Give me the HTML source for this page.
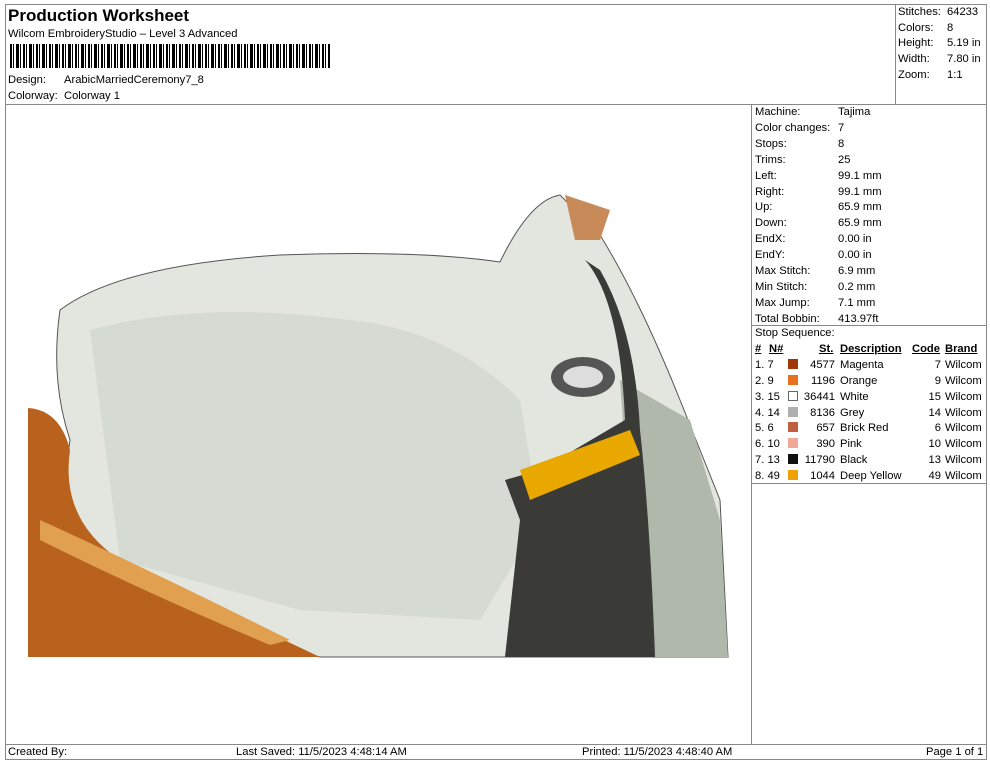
<!DOCTYPE html>
<html><head><meta charset="utf-8"><style>
*{margin:0;padding:0;box-sizing:border-box}
body{width:990px;height:762px;background:#fff;font-family:"Liberation Sans",sans-serif;font-size:11.2px;color:#000;position:relative;overflow:hidden}
.a{position:absolute;white-space:nowrap}
.l{position:absolute;background:#888}
.sw{display:inline-block;width:10px;height:10px;vertical-align:-1px}
</style></head><body>
<div class="l" style="left:5px;top:4px;width:982px;height:1px"></div>
<div class="l" style="left:5px;top:4px;width:1px;height:756px"></div>
<div class="l" style="left:986px;top:4px;width:1px;height:756px"></div>
<div class="l" style="left:5px;top:759px;width:982px;height:1px"></div>
<div class="l" style="left:5px;top:104px;width:982px;height:1px"></div>
<div class="l" style="left:895px;top:4px;width:1px;height:100px"></div>
<div class="l" style="left:751px;top:104px;width:1px;height:640px"></div>
<div class="l" style="left:751px;top:325px;width:236px;height:1px"></div>
<div class="l" style="left:751px;top:483px;width:236px;height:1px"></div>
<div class="l" style="left:5px;top:744px;width:982px;height:1px"></div>

<div class="a" style="left:8px;top:6px;font-size:17px;font-weight:bold">Production Worksheet</div>
<div class="a" style="left:8px;top:28px">Wilcom EmbroideryStudio – Level 3 Advanced</div>
<div class="a" style="left:10px;top:44px;width:320px;height:24px;background:repeating-linear-gradient(90deg,#000 0 2px,#fff 2px 3px,#000 3px 4px,#fff 4px 6px,#000 6px 9px,#fff 9px 10px,#000 10px 11px,#fff 11px 13px)"></div>
<div class="a" style="left:8px;top:74px">Design:</div><div class="a" style="left:64px;top:74px">ArabicMarriedCeremony7_8</div>
<div class="a" style="left:8px;top:90px">Colorway:</div><div class="a" style="left:64px;top:90px">Colorway 1</div>

<div class="a" style="left:898px;top:5px;line-height:15.7px">Stitches:<br>Colors:<br>Height:<br>Width:<br>Zoom:</div>
<div class="a" style="left:947px;top:5px;line-height:15.7px">64233<br>8<br>5.19 in<br>7.80 in<br>1:1</div>

<div class="a" style="left:755px;top:105px;line-height:15.9px">Machine:<br>Color changes:<br>Stops:<br>Trims:<br>Left:<br>Right:<br>Up:<br>Down:<br>EndX:<br>EndY:<br>Max Stitch:<br>Min Stitch:<br>Max Jump:<br>Total Bobbin:</div>
<div class="a" style="left:838px;top:105px;line-height:15.9px">Tajima<br>7<br>8<br>25<br>99.1 mm<br>99.1 mm<br>65.9 mm<br>65.9 mm<br>0.00 in<br>0.00 in<br>6.9 mm<br>0.2 mm<br>7.1 mm<br>413.97ft</div>

<div class="a" style="left:755px;top:327px">Stop Sequence:</div>
<div class="a" style="left:755px;top:343px;font-weight:bold;text-decoration:underline">#</div>
<div class="a" style="left:769px;top:343px;font-weight:bold;text-decoration:underline">N#</div>
<div class="a" style="left:819px;top:343px;font-weight:bold;text-decoration:underline">St.</div>
<div class="a" style="left:840px;top:343px;font-weight:bold;text-decoration:underline">Description</div>
<div class="a" style="left:912px;top:343px;font-weight:bold;text-decoration:underline">Code</div>
<div class="a" style="left:945px;top:343px;font-weight:bold;text-decoration:underline">Brand</div>
<div class="a" style="left:755px;top:358px;line-height:15.85px">1. 7<br>2. 9<br>3. 15<br>4. 14<br>5. 6<br>6. 10<br>7. 13<br>8. 49</div>
<div class="a" style="left:788px;top:358px;line-height:15.85px">
<span class="sw" style="background:#a0360c"></span><br><span class="sw" style="background:#e8701e"></span><br><span class="sw" style="background:#fff;border:1px solid #666"></span><br><span class="sw" style="background:#b0b0b0"></span><br><span class="sw" style="background:#c06040"></span><br><span class="sw" style="background:#f2a898"></span><br><span class="sw" style="background:#111"></span><br><span class="sw" style="background:#f0a000"></span></div>
<div class="a" style="left:800px;top:358px;width:35px;text-align:right;line-height:15.85px">4577<br>1196<br>36441<br>8136<br>657<br>390<br>11790<br>1044</div>
<div class="a" style="left:840px;top:358px;line-height:15.85px">Magenta<br>Orange<br>White<br>Grey<br>Brick Red<br>Pink<br>Black<br>Deep Yellow</div>
<div class="a" style="left:905px;top:358px;width:36px;text-align:right;line-height:15.85px">7<br>9<br>15<br>14<br>6<br>10<br>13<br>49</div>
<div class="a" style="left:945px;top:358px;line-height:15.85px">Wilcom<br>Wilcom<br>Wilcom<br>Wilcom<br>Wilcom<br>Wilcom<br>Wilcom<br>Wilcom</div>

<svg class="a" style="left:6px;top:105px" width="745" height="639" viewBox="6 105 745 639">
<path d="M60 310 Q120 265 280 255 Q420 250 500 262 Q530 200 560 195 L600 235 Q640 300 680 400 L720 500 L728 657 L440 657 L320 657 L90 600 Q60 500 70 440 Q50 380 60 310Z" fill="#e2e6de" stroke="#555" stroke-width="1"/>
<path d="M90 330 Q200 300 350 320 Q450 330 520 400 L540 520 L480 620 L300 610 L120 560 Z" fill="#d2d8ce" opacity="0.8"/>
<path d="M620 380 L690 420 L720 520 L728 657 L640 657 Z" fill="#b0b8ac"/>
<path d="M565 195 L610 210 L600 240 L575 240 Z" fill="#c98a5a"/>
<path d="M585 260 Q620 300 625 420 L540 470 L505 480 L520 520 L505 657 L655 657 Q650 520 640 430 Q635 330 600 270 Z" fill="#3a3a36"/>
<path d="M520 470 L630 430 L640 455 L530 500 Z" fill="#e8a800"/>
<ellipse cx="583" cy="377" rx="32" ry="20" fill="#555"/><ellipse cx="583" cy="377" rx="20" ry="11" fill="#ddd"/>
<path d="M28 408 Q60 410 70 450 Q60 520 120 560 Q220 610 320 657 L28 657 Z" fill="#b8621e"/>
<path d="M40 520 Q150 570 290 640 L270 645 Q140 590 40 540 Z" fill="#e0a050"/>
</svg>

<div class="a" style="left:8px;top:746px">Created By:</div>
<div class="a" style="left:236px;top:746px">Last Saved: 11/5/2023 4:48:14 AM</div>
<div class="a" style="left:582px;top:746px">Printed: 11/5/2023 4:48:40 AM</div>
<div class="a" style="left:926px;top:746px">Page 1 of 1</div>
</body></html>
